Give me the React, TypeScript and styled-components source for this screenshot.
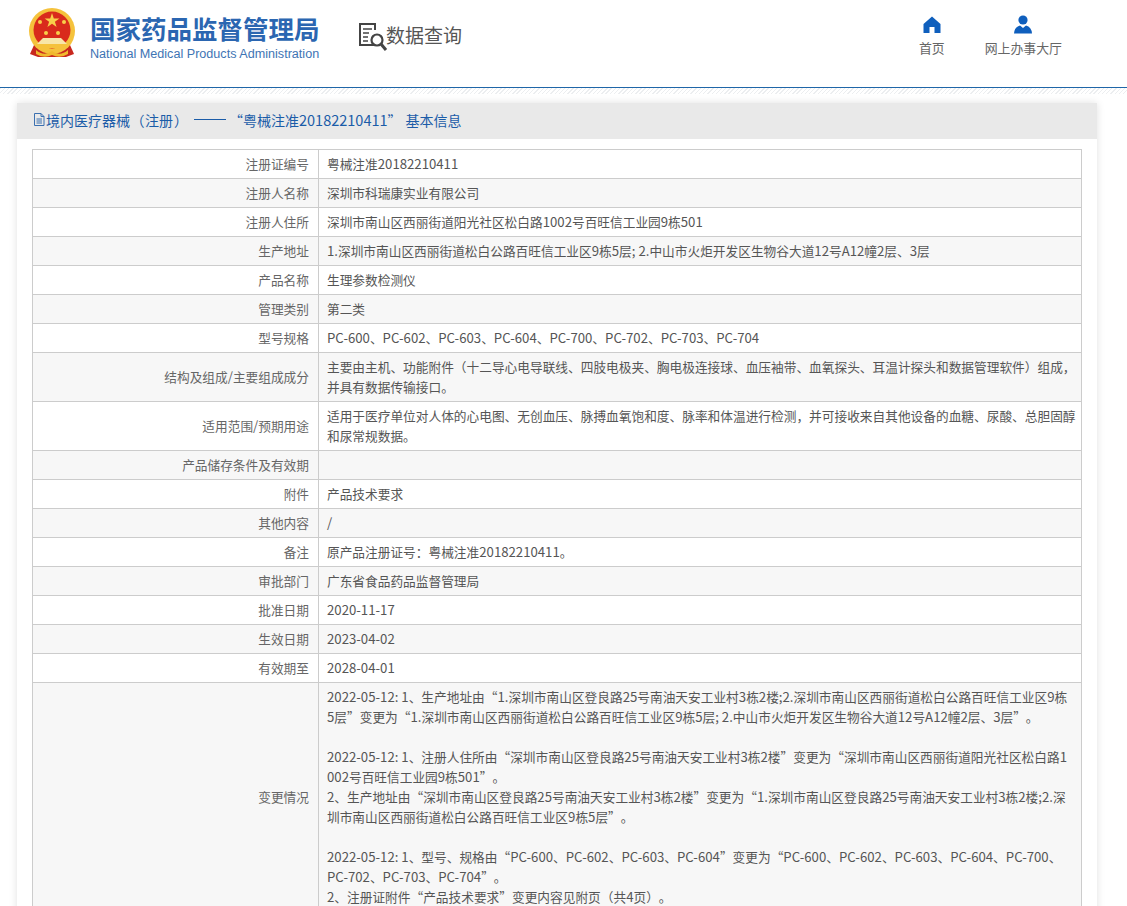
import React from "react";
import styled, { createGlobalStyle } from "styled-components";

const Global = createGlobalStyle`
  html, body { margin: 0; padding: 0; background: #fff; overflow: hidden; height: 906px; }
  body {
    font-family: "Noto Sans CJK SC", "Open Sans", sans-serif;
    font-size: 12.7px;
    color: #555;
    text-spacing-trim: space-all;
  }
`;

const Header = styled.header`
  height: 87px;
  display: flex;
  align-items: flex-start;
  padding-left: 28px;
  border-bottom: 1px solid #1f66a8;
  width: 1099px;
`;
const Emblem = styled.svg`
  width: 48px;
  height: 52px;
  margin-top: 7px;
  flex: none;
`;
const Brand = styled.div`
  margin: 11px 0 0 14px;
  width: 230px;
  flex: none;
`;
const BrandCn = styled.div`
  font-weight: 700;
  font-size: 25.5px;
  line-height: 33px;
  color: #2b66b1;
  white-space: nowrap;
`;
const BrandEn = styled.div`
  font-family: "Liberation Sans", sans-serif;
  font-size: 12.62px;
  line-height: 16px;
  margin-top: 2px;
  color: #3e74b4;
  white-space: nowrap;
`;
const Query = styled.div`
  display: flex;
  align-items: flex-start;
  margin: 22px 0 0 38px;
  flex: none;
`;
const QueryIcon = styled.svg`
  width: 30px;
  height: 31px;
  flex: none;
`;
const QueryText = styled.span`
  font-size: 19px;
  line-height: 26px;
  color: #555;
  white-space: nowrap;
  margin-left: -2px;
`;
const Nav = styled.nav`
  margin-left: auto;
  margin-right: 65px;
  display: flex;
  gap: 40px;
  padding-top: 14px;
`;
const NavItem = styled.a`
  display: flex;
  flex-direction: column;
  align-items: center;
  color: #666;
  font-size: 12.9px;
  line-height: 20px;
  white-space: nowrap;
`;
const NavIcon = styled.svg`
  width: 20px;
  height: 20px;
  margin: 1px 0 3px;
  fill: #0f5fbd;
`;
const Hatch = styled.div`
  height: 6px;
  background: repeating-linear-gradient(135deg, #eceef0 0 1px, #fff 1px 3px);
`;
const Panel = styled.section`
  margin: 9px 30px 0 17px;
  background: #fff;
  box-shadow: 0 0 8px rgba(0, 0, 0, 0.12);
  padding-bottom: 20px;
`;
const PanelHead = styled.h2`
  margin: 0;
  height: 33px;
  padding: 0 0 3px 15px;
  background: #e9e9e9;
  display: flex;
  align-items: center;
  font-weight: 400;
  font-size: 14px;
  color: #1b5ca8;
  white-space: nowrap;
`;
const HeadIcon = styled.svg`
  width: 14px;
  height: 15px;
  flex: none;
`;
const HeadMark = styled.span<{ $width: number; $align: string }>`
  display: inline-block;
  width: ${(p) => p.$width}px;
  text-align: ${(p) => p.$align};
`;
const HeadDigits = styled.span`
  font-size: 14.5px;
`;
const DashRule = styled.span`
  display: inline-block;
  width: 32px;
  height: 1px;
  margin: 0 3px 0 5px;
  background: #1b5ca8;
`;
const Table = styled.table`
  width: 1050px;
  margin: 10px 15px 0;
  border-collapse: collapse;
  table-layout: fixed;
  line-height: 20px;
`;
const Row = styled.tr<{ $striped: boolean }>`
  background: ${(p) => (p.$striped ? "#f7f7f7" : "#fff")};
`;
const Label = styled.td`
  width: 286px;
  box-sizing: border-box;
  border: 1px solid #ccc;
  padding: 4px 9px 4px 8px;
  text-align: right;
  color: #666;
`;
const Value = styled.td`
  border: 1px solid #ccc;
  padding: 4px 8px;
  color: #555;
`;
const Line = styled.div`
  min-height: 20px;
  white-space: nowrap;
`;
const Latin = styled.span`
  font-size: 13.2px;
`;

function Mixed({ text }: { text: string }) {
  const parts = text.split(/([A-Za-z0-9.:;/\- ]+)/);
  return (
    <>
      {parts.map((p, i) => (i % 2 === 1 ? <Latin key={i}>{p}</Latin> : p))}
    </>
  );
}

const rows: [string, string[]][] = [
  ["注册证编号", ["粤械注准20182210411"]],
  ["注册人名称", ["深圳市科瑞康实业有限公司"]],
  ["注册人住所", ["深圳市南山区西丽街道阳光社区松白路1002号百旺信工业园9栋501"]],
  ["生产地址", ["1.深圳市南山区西丽街道松白公路百旺信工业区9栋5层; 2.中山市火炬开发区生物谷大道12号A12幢2层、3层"]],
  ["产品名称", ["生理参数检测仪"]],
  ["管理类别", ["第二类"]],
  ["型号规格", ["PC-600、PC-602、PC-603、PC-604、PC-700、PC-702、PC-703、PC-704"]],
  ["结构及组成/主要组成成分", ["主要由主机、功能附件（十二导心电导联线、四肢电极夹、胸电极连接球、血压袖带、血氧探头、耳温计探头和数据管理软件）组成，", "并具有数据传输接口。"]],
  ["适用范围/预期用途", ["适用于医疗单位对人体的心电图、无创血压、脉搏血氧饱和度、脉率和体温进行检测，并可接收来自其他设备的血糖、尿酸、总胆固醇", "和尿常规数据。"]],
  ["产品储存条件及有效期", [""]],
  ["附件", ["产品技术要求"]],
  ["其他内容", ["/"]],
  ["备注", ["原产品注册证号：粤械注准20182210411。"]],
  ["审批部门", ["广东省食品药品监督管理局"]],
  ["批准日期", ["2020-11-17"]],
  ["生效日期", ["2023-04-02"]],
  ["有效期至", ["2028-04-01"]],
  ["变更情况", [
    "2022-05-12: 1、生产地址由“1.深圳市南山区登良路25号南油天安工业村3栋2楼;2.深圳市南山区西丽街道松白公路百旺信工业区9栋",
    "5层”变更为“1.深圳市南山区西丽街道松白公路百旺信工业区9栋5层; 2.中山市火炬开发区生物谷大道12号A12幢2层、3层”。",
    "",
    "2022-05-12: 1、注册人住所由“深圳市南山区登良路25号南油天安工业村3栋2楼”变更为“深圳市南山区西丽街道阳光社区松白路1",
    "002号百旺信工业园9栋501”。",
    "2、生产地址由“深圳市南山区登良路25号南油天安工业村3栋2楼”变更为“1.深圳市南山区登良路25号南油天安工业村3栋2楼;2.深",
    "圳市南山区西丽街道松白公路百旺信工业区9栋5层”。",
    "",
    "2022-05-12: 1、型号、规格由“PC-600、PC-602、PC-603、PC-604”变更为“PC-600、PC-602、PC-603、PC-604、PC-700、",
    "PC-702、PC-703、PC-704”。",
    "2、注册证附件“产品技术要求”变更内容见附页（共4页）。",
  ]],
];

export default function App() {
  return (
    <>
      <Global />
      <Header>
        <Emblem viewBox="0 0 48 52">
          <path d="M6 38 L2 47 L10 50 L38 50 L46 47 L42 38 Z" fill="#c8281e" />
          <circle cx="24" cy="24" r="23" fill="#f5c23c" />
          <circle cx="24" cy="23" r="18.5" fill="#d92a1c" />
          <polygon points="24,6 25.8,11.4 31.4,11.4 26.9,14.7 28.6,20 24,16.8 19.4,20 21.1,14.7 16.6,11.4 22.2,11.4" fill="#f8cf4a" />
          <circle cx="12" cy="15" r="2" fill="#f8cf4a" />
          <circle cx="36" cy="15" r="2" fill="#f8cf4a" />
          <circle cx="18" cy="26" r="2" fill="#f8cf4a" />
          <circle cx="30" cy="26" r="2" fill="#f8cf4a" />
          <path d="M9 37 L15 31 L33 31 L39 37 Z" fill="#f8e6a8" />
          <rect x="11" y="37" width="26" height="4" fill="#f5c23c" />
          <path d="M8 43 Q16 50 24 44 Q32 50 40 43 L40 47 Q32 52 24 48 Q16 52 8 47 Z" fill="#f0b92e" />
        </Emblem>
        <Brand>
          <BrandCn>国家药品监督管理局</BrandCn>
          <BrandEn>National Medical Products Administration</BrandEn>
        </Brand>
        <Query>
          <QueryIcon viewBox="0 0 30 31" fill="none" stroke="#444">
            <path d="M17 23 H2 V2 H17 V8" strokeWidth="2" />
            <path d="M5 7 H14 M5 11 H11 M5 15 H10 M5 19 H10" strokeWidth="1.5" />
            <circle cx="19" cy="18" r="5.5" strokeWidth="2.2" />
            <path d="M23 22 L28 28" strokeWidth="3" />
          </QueryIcon>
          <QueryText>数据查询</QueryText>
        </Query>
        <Nav>
          <NavItem>
            <NavIcon viewBox="0 0 20 20">
              <path d="M10 1.5 L18.5 9 V18 H12.5 V12 H7.5 V18 H1.5 V9 Z" />
            </NavIcon>
            首页
          </NavItem>
          <NavItem>
            <NavIcon viewBox="0 0 20 20">
              <circle cx="10" cy="5" r="4.6" />
              <path d="M1 18.5 Q1.5 12 7 10.5 L10 13 L13 10.5 Q18.5 12 19 18.5 Z" />
            </NavIcon>
            网上办事大厅
          </NavItem>
        </Nav>
      </Header>
      <Hatch />
      <Panel>
        <PanelHead>
          <HeadIcon viewBox="0 0 14 15" fill="none" stroke="#3b70b0" strokeWidth="1">
            <path d="M2.5 1.5 H9 L12 4.5 V13.5 H2.5 Z M9 1.5 V4.5 H12 M4.5 7 H10 M4.5 9 H10 M4.5 11 H10" />
          </HeadIcon>
          境内医疗器械
          <HeadMark $width={15} $align="center">（</HeadMark>
          注册
          <HeadMark $width={16} $align="center">）</HeadMark>
          <DashRule />
          <HeadMark $width={14} $align="right">“</HeadMark>
          粤械注准<HeadDigits>20182210411</HeadDigits>
          <HeadMark $width={18} $align="left">”</HeadMark>
          基本信息
        </PanelHead>
        <Table>
          <tbody>
            {rows.map(([label, lines], i) => (
              <Row key={label} $striped={i % 2 === 1}>
                <Label>
                  <Mixed text={label} />
                </Label>
                <Value>
                  {lines.map((l, j) => (
                    <Line key={j}>
                      <Mixed text={l} />
                    </Line>
                  ))}
                </Value>
              </Row>
            ))}
          </tbody>
        </Table>
      </Panel>
    </>
  );
}
